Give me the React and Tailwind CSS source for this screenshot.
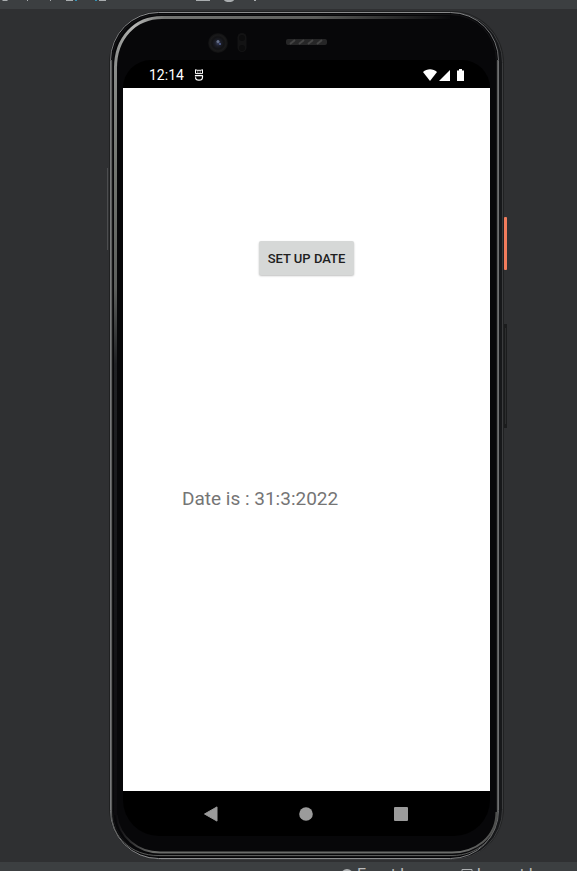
function DeviceFrame() {
  return (
    <svg
      className="absolute inset-0 h-full w-full"
      viewBox="107 9 400 853"
      preserveAspectRatio="none"
      fill="none"
      aria-hidden="true"
    >
      <defs>
        <linearGradient id="rim" x1="0" y1="0" x2="1" y2="0">
          <stop offset="0" stopColor="#77787a" />
          <stop offset="0.1" stopColor="#8d8e90" />
          <stop offset="0.85" stopColor="#8a8b8c" />
          <stop offset="1" stopColor="#6e6f71" />
        </linearGradient>
        <linearGradient id="bevelTop" gradientUnits="userSpaceOnUse" x1="114" y1="0" x2="450" y2="0">
          <stop offset="0" stopColor="#8b8d8b" />
          <stop offset="0.06" stopColor="#b4b5b3" />
          <stop offset="0.15" stopColor="#747573" />
          <stop offset="0.6" stopColor="#5d5e5c" />
          <stop offset="1" stopColor="#0a0a0c" />
        </linearGradient>
        <linearGradient id="bevelLeft" gradientUnits="userSpaceOnUse" x1="0" y1="60" x2="0" y2="820">
          <stop offset="0" stopColor="#8b8d8b" />
          <stop offset="0.15" stopColor="#71746f" />
          <stop offset="0.3" stopColor="#5c5e5c" />
          <stop offset="0.4" stopColor="#202124" />
          <stop offset="1" stopColor="#0c0b0e" />
        </linearGradient>
        <linearGradient id="bevelBottom" gradientUnits="userSpaceOnUse" x1="116" y1="0" x2="498" y2="0">
          <stop offset="0" stopColor="#0c0b0e" />
          <stop offset="0.1" stopColor="#6b6c6a" />
          <stop offset="0.9" stopColor="#6b6c6a" />
          <stop offset="1" stopColor="#4c4d4c" />
        </linearGradient>
        <radialGradient id="lens">
          <stop offset="0" stopColor="#39405c" />
          <stop offset="0.3" stopColor="#1c1e28" />
          <stop offset="0.6" stopColor="#121214" />
          <stop offset="0.8" stopColor="#1a1a1b" />
          <stop offset="1" stopColor="#0e0e0f" />
        </radialGradient>
      </defs>

      {/* volume and power keys */}
      <path d="M107.5 168V250" stroke="#4c4d4f" />
      <rect x="503" y="324" width="5" height="104" rx="1" fill="#1b1c1d" />
      <path d="M505.5 328V424" stroke="#2c2d2e" />
      <rect x="504" y="217" width="3" height="53" rx="1" fill="#f27c5c" />

      {/* body */}
      <rect x="109" y="11" width="395" height="849" rx="52" fill="#202122" />
      <rect x="110.5" y="12.5" width="392" height="847" rx="50" fill="#17181a" stroke="#3b3c3e" />
      <rect x="110.5" y="12.5" width="388" height="846" rx="48" fill="#070709" stroke="url(#rim)" />
      <rect x="112.5" y="14.5" width="384" height="842" rx="46" stroke="#151517" />

      {/* bevels */}
      <path d="M115.5 68C115.5 38 135 17.5 162 17.5H450" stroke="url(#bevelTop)" strokeWidth="3" />
      <path d="M115.5 66V815" stroke="url(#bevelLeft)" strokeWidth="3" />
      <path d="M111.5 60V812C111.5 838 132 855.5 158 855.5H452C478 855.5 497.5 838 497.5 812V60" stroke="#5a5b5a" />
      <path d="M116.5 815C119 837 138 852.5 160 852.5H452C475 852.5 496.5 838 496.5 812" stroke="url(#bevelBottom)" strokeWidth="2" />

      {/* camera, sensor and speaker */}
      <circle cx="218" cy="43" r="10" fill="url(#lens)" />
      <circle cx="218" cy="41.5" r="1.5" fill="#68728c" />
      <circle cx="220" cy="44" r="1" fill="#526299" />
      <rect x="237.5" y="33" width="9" height="19" rx="4.5" fill="#131314" />
      <circle cx="242" cy="38" r="3" fill="#0c0c0d" />
      <circle cx="242" cy="48" r="3" fill="#0c0c0d" />
      <rect x="286" y="39" width="41" height="6" rx="2" fill="#262627" />
      <path d="M290 44l5-4M299 44l5-4M308 44l5-4M317 44l5-4" stroke="#444444" strokeWidth="2" />
    </svg>
  );
}

function StatusBar() {
  return (
    <div className="flex h-7 items-center bg-black pt-0.5 pr-[25px] pl-[26px] text-white">
      <span className="text-sm leading-5">12:14</span>
      <svg className="ml-2.5 h-3 w-2.5" viewBox="0 0 10 12" fill="none" stroke="white" aria-hidden="true">
        <path d="M1.5 0 2.5 1.3h5L8.5 0M1.5 1v3.6h7V1M3.3 3h1M5.7 3h1" strokeWidth="1" />
        <path d="M8.8 6.6H1.5V7.5M1.5 8.2a3.5 3 0 0 0 7 0V6.6" strokeWidth="1.2" />
      </svg>
      <svg className="ml-auto h-3 w-[42px]" viewBox="0 0 42 12" fill="white" aria-hidden="true">
        <path d="M0 3C4-.8 10-.8 14 3L7 12z" />
        <path d="M16 12H27V1z" />
        <path d="M34 1.5h2V0h3v1.5h2V12h-7z" />
      </svg>
    </div>
  );
}

function NavigationBar() {
  return (
    <nav className="flex h-[45px] items-center justify-center gap-[79px] bg-black pr-0.5" aria-label="Navigation">
      <button type="button" aria-label="Back" className="h-4 w-4">
        <svg className="h-4 w-4" viewBox="0 0 16 16" aria-hidden="true">
          <path d="M1.5 8 14 .9v14.2z" fill="#9b9b9b" stroke="#9b9b9b" strokeLinejoin="round" />
        </svg>
      </button>
      <button type="button" aria-label="Home" className="h-4 w-4">
        <svg className="h-4 w-4" viewBox="0 0 16 16" aria-hidden="true">
          <circle cx="8" cy="8" r="6.8" fill="#9b9b9b" />
        </svg>
      </button>
      <button type="button" aria-label="Recents" className="h-4 w-4">
        <svg className="h-4 w-4" viewBox="0 0 16 16" aria-hidden="true">
          <rect x="1" y="1" width="14" height="14" rx="1" fill="#9b9b9b" />
        </svg>
      </button>
    </nav>
  );
}

function Phone() {
  return (
    <div className="relative flex w-[400px] flex-col px-4 pt-[51px] pb-[26px]">
      <DeviceFrame />
      <div className="relative mr-[1px] flex flex-1 flex-col overflow-hidden rounded-t-[28px] rounded-b-[36px]">
        <StatusBar />
        <div className="flex flex-1 flex-col items-start bg-white px-[59px] pt-[153px]">
          <button
            type="button"
            className="self-center rounded-xs bg-[#d6d8d7] px-[9px] pt-[9px] pb-[7px] text-[13px] leading-[18px] font-medium text-[#202020] shadow-[0_1px_2px_rgba(0,0,0,0.25)]"
          >
            SET UP DATE
          </button>
          <p className="mt-[210px] text-[19px] leading-7 text-[#757575]">Date is : 31:3:2022</p>
        </div>
        <NavigationBar />
      </div>
    </div>
  );
}

export default function App() {
  return (
    <div className="flex h-screen flex-col overflow-hidden bg-[#2f3032] font-[Roboto,sans-serif]">
      <header className="h-[9px] shrink-0 overflow-hidden bg-[#3c3f41]">
        <svg className="h-[9px] w-[280px]" viewBox="0 0 280 9" aria-hidden="true">
          <g fill="#a9adaf">
            <path d="M2 0h6l-1 1H3zM27 0h1v1h-1zM50 0h1v1h-1zM66 0h7v1h-7zM99 0h7v1h-7zM196 0h14v1h-14zM224 0h10q-1 2-5 2t-5-2zM254 0h2v1h-2z" />
          </g>
          <path d="M75 0h2v1h-2zM95 0h2v1h-2z" fill="#3592b5" />
        </svg>
      </header>
      <main className="flex min-h-0 flex-1 justify-center pl-[37px]">
        <Phone />
      </main>
      <footer className="flex h-[9px] shrink-0 items-start gap-[34px] overflow-hidden bg-[#3c3f41] pt-[3px] pl-[341px] text-base leading-5 text-[#bbbbbb]">
        <span className="flex shrink-0 items-start gap-1 whitespace-nowrap">
          <svg className="mt-1 h-3 w-3" viewBox="0 0 12 12" fill="#aeb1b3" aria-hidden="true">
            <circle cx="6" cy="6" r="6" />
          </svg>
          Event Log
        </span>
        <span className="flex shrink-0 items-start gap-1 whitespace-nowrap">
          <svg className="mt-1 h-3 w-3" viewBox="0 0 12 12" fill="none" stroke="#aeb1b3" aria-hidden="true">
            <path d="M1 .5h10v11H1z" />
          </svg>
          Layout Inspector
        </span>
      </footer>
    </div>
  );
}
